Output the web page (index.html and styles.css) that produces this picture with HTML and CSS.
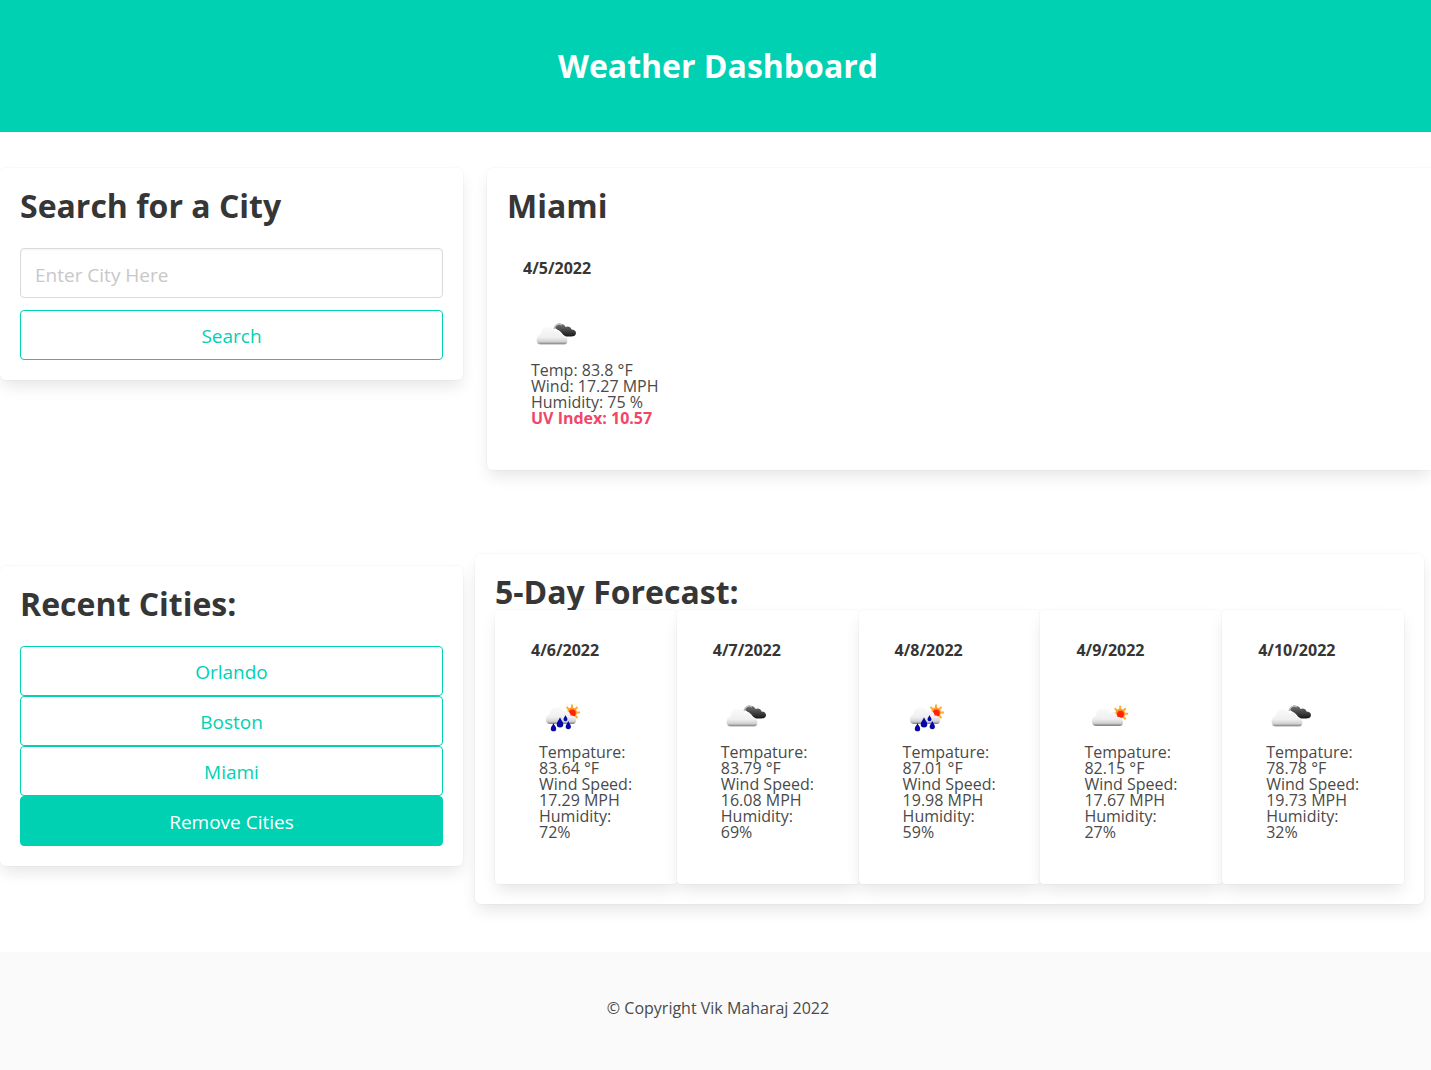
FILE: index.html
```html
<!DOCTYPE html>
<html lang="en">
<head>
<meta charset="utf-8">
<title>Weather Dashboard</title>
<link rel="stylesheet" href="styles.css">
</head>
<body>
<svg class="defs" aria-hidden="true">
  <defs>
    <linearGradient id="cloudFill" x1="0" y1="0" x2="0" y2="1">
      <stop offset="0" stop-color="#fafafa"/><stop offset=".6" stop-color="#efefef"/><stop offset=".84" stop-color="#d0d0d0"/><stop offset="1" stop-color="#777"/>
    </linearGradient>
    <linearGradient id="darkFill" x1="0" y1="0" x2="0" y2="1">
      <stop offset="0" stop-color="#777"/><stop offset=".5" stop-color="#484848"/><stop offset="1" stop-color="#181818"/>
    </linearGradient>
    <path id="cloud" d="M4 22C.8 21.600 0 19.500 0 17C0 14 1.500 12.500 4 12C4 7.500 7 4.500 11 4.500C14.500 4.500 17 6 18 9C20 7.500 23 8 24.500 10.500C25 11.500 25.300 12 25.300 13C29 13 31 15 31 18C31 20.500 30 22 27.500 22Z"/>
    <g id="sun">
      <path d="M0-8V8M-8 0H8M-5.500-5.500L5.500 5.500M5.500-5.500L-5.500 5.500" stroke="#ffab3a" stroke-width="2"/>
      <circle r="4.900" fill="#ff9a24"/>
      <circle r="3.500" cx=".3" cy=".5" fill="#ff2408"/>
    </g>
    <path id="drop" d="M0-5C1-2 3.300-.5 3.300 2A3.300 3.300 0 0 1-3.300 2C-3.300-.5-1-2 0-5Z" fill="#0707a8"/>
    <symbol id="broken" viewBox="0 0 50 50">
      <path d="M24 19C25 15 27.500 13.500 31 15C33 15.500 34 16.500 34.500 18C37 16.500 40 18 40.500 20.500C43 20.500 45 22 45 24C45 26.500 43 27.500 40 27.500H35C32 27 31 23 27 21Z" fill="url(#darkFill)"/>
      <path d="M23 20C24 15.500 27.500 14 31 16" fill="none" stroke="#bbb" stroke-width="1.400"/>
      <use href="#cloud" transform="translate(5.500 13.500)" fill="url(#cloudFill)" stroke="#fff" stroke-width=".35"/>
    </symbol>
    <symbol id="few" viewBox="0 0 50 50">
      <use href="#sun" transform="translate(36.200 22.700)"/>
      <use href="#cloud" transform="translate(8 13)" fill="url(#cloudFill)"/>
    </symbol>
    <symbol id="rain" viewBox="0 0 50 50">
      <use href="#sun" transform="translate(33 21.500)"/>
      <use href="#cloud" transform="translate(7 12) scale(.97 .96)" fill="url(#cloudFill)"/>
      <use href="#drop" transform="translate(14.500 36) scale(.82)"/>
      <use href="#drop" transform="translate(21 31.200)"/>
      <use href="#drop" transform="translate(26.500 27) scale(.6)"/>
      <use href="#drop" transform="translate(29.300 34) scale(.8)"/>
    </symbol>
  </defs>
</svg>
<header class="hero"><h1 class="title">Weather Dashboard</h1></header>
<main class="dashboard">
  <section class="box search">
    <h2 class="title">Search for a City</h2>
    <input class="input" type="text" placeholder="Enter City Here">
    <button class="button">Search</button>
  </section>
  <section class="box current">
    <h2 class="title">Miami</h2>
    <div class="day">
      <h3 class="date">4/5/2022</h3>
      <svg class="icon"><use href="#broken"/></svg>
      <ul class="stats"><li>Temp: 83.8 °F</li><li>Wind: 17.27 MPH</li><li>Humidity: 75 %</li><li class="uv">UV Index: 10.57</li></ul>
    </div>
  </section>
  <section class="box recent">
    <h2 class="title">Recent Cities:</h2>
    <button class="button">Orlando</button>
    <button class="button">Boston</button>
    <button class="button">Miami</button>
    <button class="button solid">Remove Cities</button>
  </section>
  <section class="box forecast">
    <h2 class="title">5-Day Forecast:</h2>
    <div class="days">
      <article class="card"><h3 class="date">4/6/2022</h3><svg class="icon"><use href="#rain"/></svg><ul class="stats"><li>Tempature: 83.64 °F</li><li>Wind Speed: 17.29 MPH</li><li>Humidity: 72%</li></ul></article>
      <article class="card"><h3 class="date">4/7/2022</h3><svg class="icon"><use href="#broken"/></svg><ul class="stats"><li>Tempature: 83.79 °F</li><li>Wind Speed: 16.08 MPH</li><li>Humidity: 69%</li></ul></article>
      <article class="card"><h3 class="date">4/8/2022</h3><svg class="icon"><use href="#rain"/></svg><ul class="stats"><li>Tempature: 87.01 °F</li><li>Wind Speed: 19.98 MPH</li><li>Humidity: 59%</li></ul></article>
      <article class="card"><h3 class="date">4/9/2022</h3><svg class="icon"><use href="#few"/></svg><ul class="stats"><li>Tempature: 82.15 °F</li><li>Wind Speed: 17.67 MPH</li><li>Humidity: 27%</li></ul></article>
      <article class="card"><h3 class="date">4/10/2022</h3><svg class="icon"><use href="#broken"/></svg><ul class="stats"><li>Tempature: 78.78 °F</li><li>Wind Speed: 19.73 MPH</li><li>Humidity: 32%</li></ul></article>
    </div>
  </section>
</main>
<footer class="footer">© Copyright Vik Maharaj 2022</footer>
</body>
</html>
```
FILE: styles.css
```css
* { box-sizing: border-box; margin: 0; padding: 0; }
html { background: #fff; overflow: hidden; }
body { font: 400 16px/16px "Open Sans", sans-serif; color: #4a4a4a; }
.defs { display: block; width: 0; height: 0; }
.hero { height: 132px; display: flex; align-items: center; justify-content: center; padding-left: 5px; background: #00d1b2; }
.title { font-size: 32px; line-height: 36px; font-weight: 700; color: #363636; }
.hero .title { color: #fff; }
.dashboard { height: 820px; display: grid; grid-template-columns: 463px 956px; grid-template-rows: 386px auto; column-gap: 12px; padding-top: 36px; align-items: start; }
.box { background: #fff; border-radius: 6px; padding: 20px; box-shadow: 0 8px 16px -2px rgba(10,10,10,.1), 0 0 0 1px rgba(10,10,10,.02); }
.search .title, .recent .title { margin-bottom: 24px; }
.input, .button { display: block; width: 100%; height: 50px; border-radius: 4px; font: 400 19px/30px "Open Sans", sans-serif; text-align: center; }
.input { text-align: left; padding: 3px 14px 0; margin-bottom: 12px; border: 1px solid #dbdbdb; box-shadow: inset 0 1px 2px rgba(10,10,10,.05); }
.input::placeholder { color: #c8c8c8; opacity: 1; }
.button { padding-top: 2px; background: #fff; border: 1px solid #00d1b2; color: #00d1b2; }
.button.solid { background: #00d1b2; color: #fff; }
.current { margin-left: 12px; height: 302px; border-radius: 6px 0 0 6px; }
.day { padding: 36px 16px 0; }
.date { font-size: 16px; line-height: 16px; font-weight: 700; color: #363636; }
.icon { display: block; width: 50px; height: 50px; margin: 33px 0 3px 8px; }
.stats { list-style: none; padding-left: 8px; }
.uv { color: #f14668; font-weight: 700; }
.recent { margin-top: 12px; }
.forecast { width: 949px; height: 350px; }
.days { display: grid; grid-template-columns: repeat(5, 1fr); }
.card { position: relative; height: 274px; padding: 32px 36px; background: #fff; border-radius: 4px; box-shadow: 0 8px 16px -2px rgba(10,10,10,.1), 0 0 0 1px rgba(10,10,10,.02); }
.footer { height: 118px; padding: 48px 0 0 5px; text-align: center; background: #fafafa; }
```
